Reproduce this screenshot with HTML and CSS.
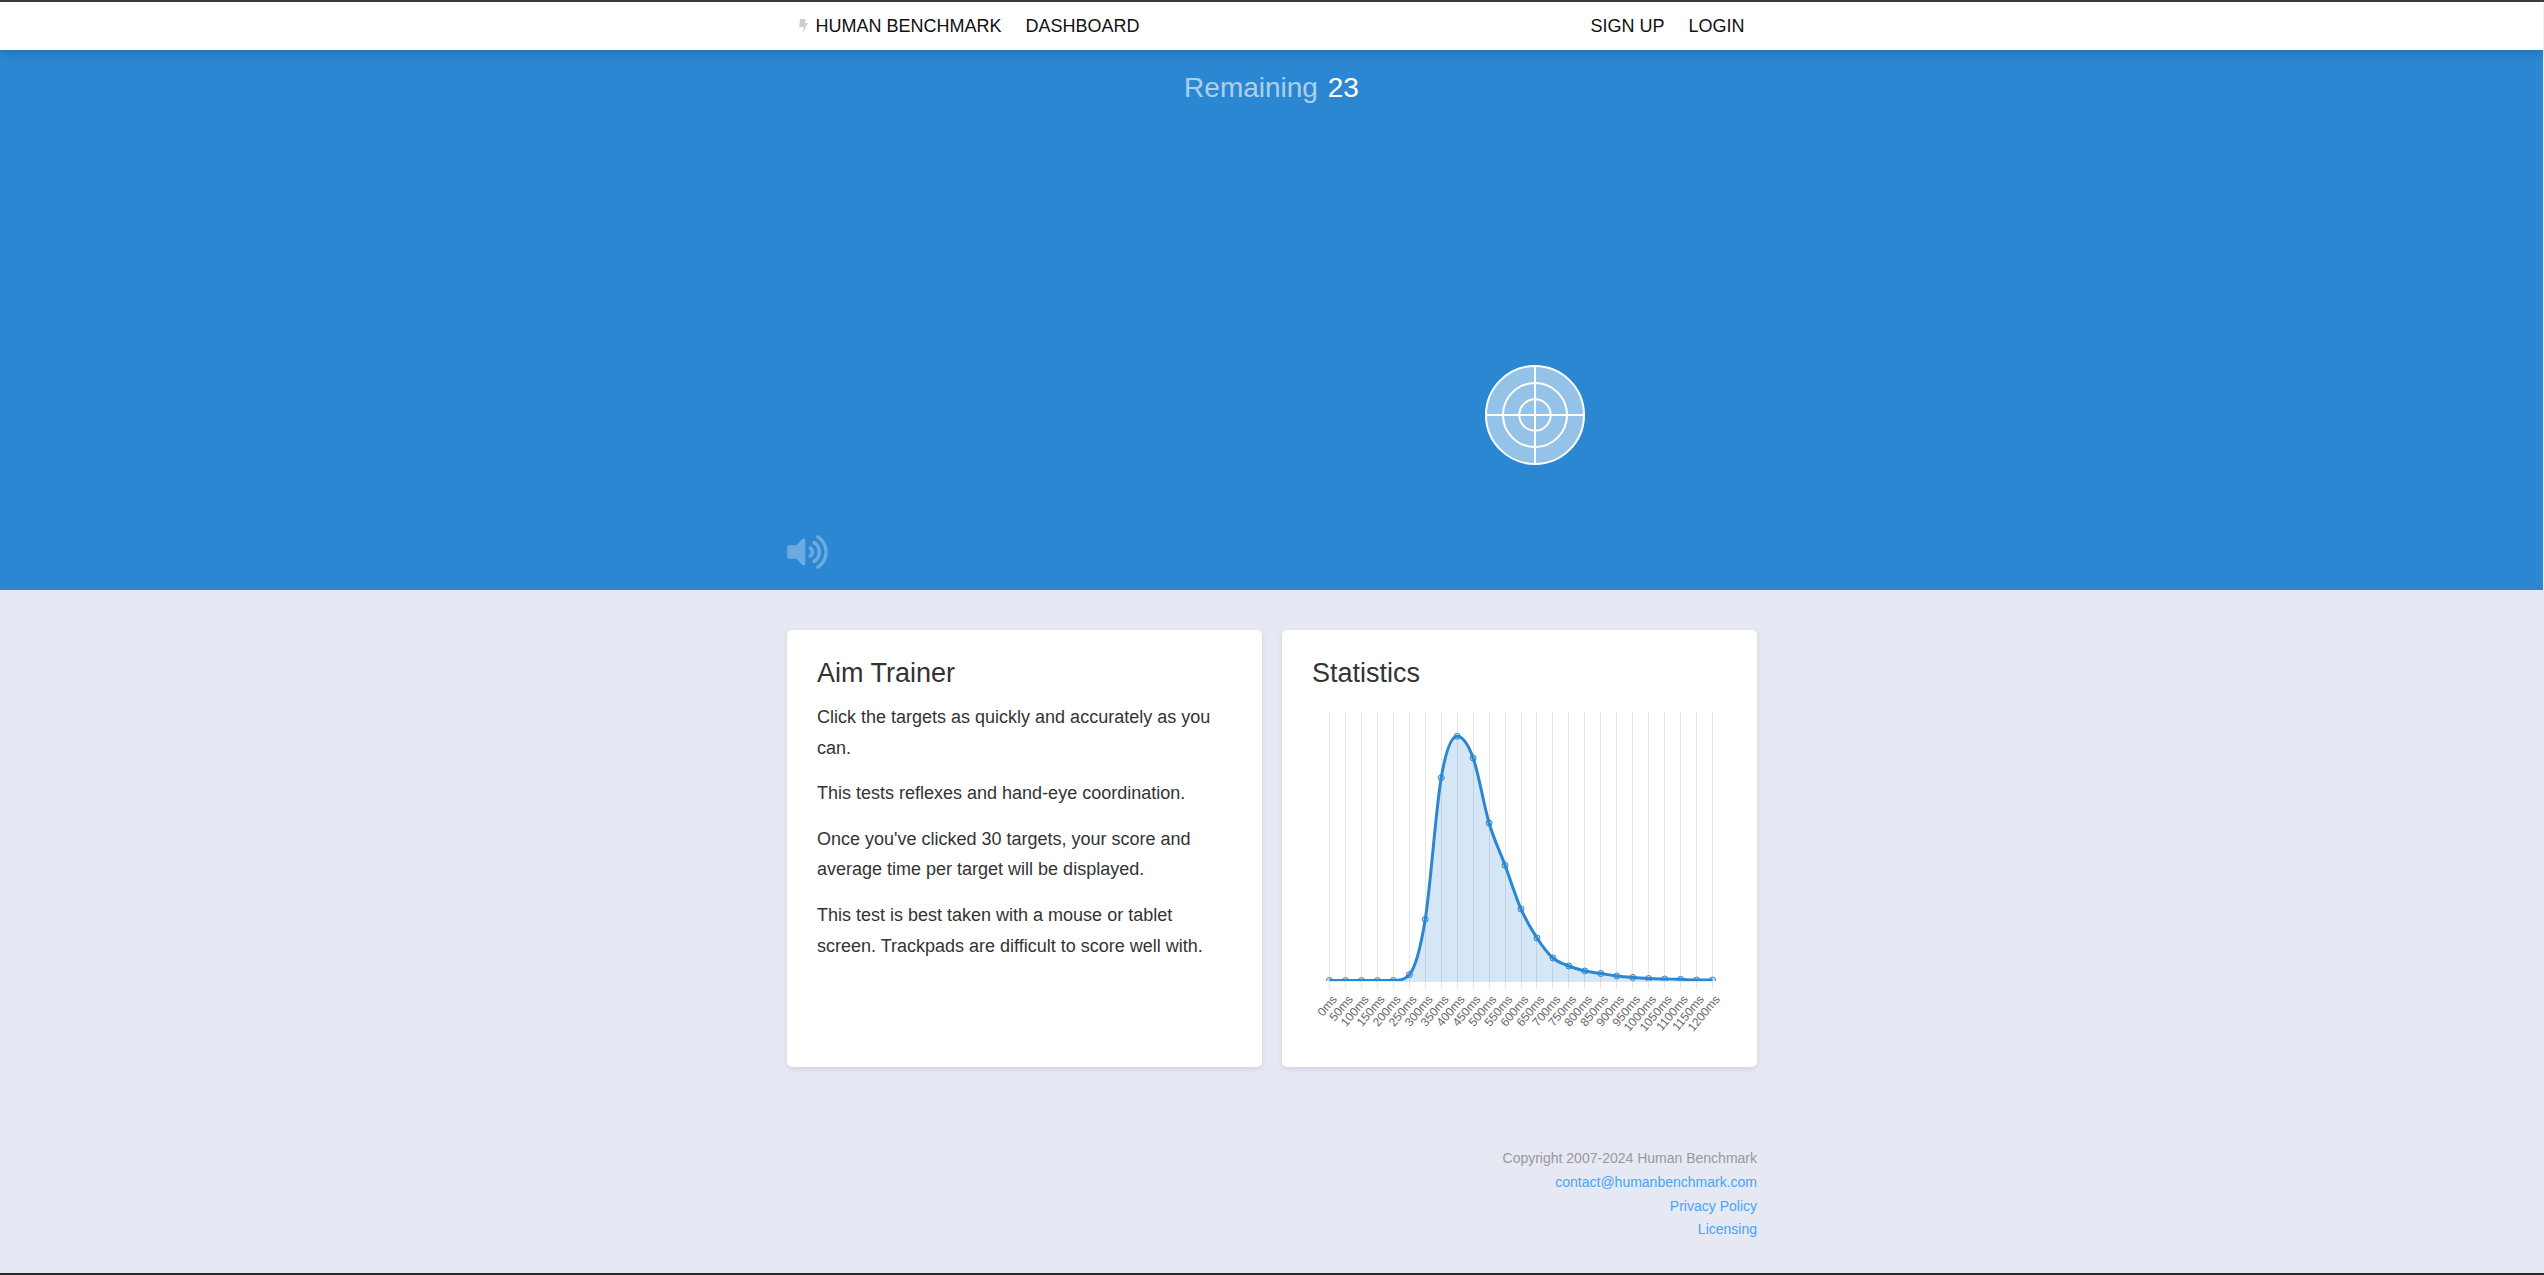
FILE: index.html
```html
<!DOCTYPE html>
<html lang="en">
<head>
<meta charset="utf-8">
<title>Human Benchmark - Aim Trainer</title>
<link rel="stylesheet" href="styles.css">
</head>
<body>
<header class="topbar">
  <nav class="container nav">
    <a class="nav-link brand" href="#"><svg class="bolt" viewBox="0 0 9 14"><path d="M1 0h6L5.900 4h3L3.800 14l1-6H.2z"/></svg>HUMAN BENCHMARK</a>
    <a class="nav-link" href="#">DASHBOARD</a>
    <span class="spacer"></span>
    <a class="nav-link" href="#">SIGN UP</a>
    <a class="nav-link" href="#">LOGIN</a>
  </nav>
</header>
<main>
  <section class="game">
    <div class="container stage">
      <div class="remaining"><span class="label">Remaining</span> <span>23</span></div>
      <svg class="target" viewBox="0 0 102 102">
        <circle class="disc" cx="51" cy="51" r="49"/>
        <circle cx="51" cy="51" r="32"/>
        <circle cx="51" cy="51" r="15.700"/>
        <path d="M51 2v98M2 51h98"/>
      </svg>
      <svg class="volume" viewBox="0 0 576 512"><path d="M215.030 71.050L126.060 160H24c-13.260 0-24 10.740-24 24v144c0 13.250 10.740 24 24 24h102.060l88.970 88.950c15.030 15.030 40.970 4.470 40.970-16.970V88.020c0-21.460-25.960-31.980-40.970-16.970zm233.320-51.080c-11.170-7.330-26.180-4.240-33.510 6.950-7.340 11.170-4.220 26.180 6.950 33.510 66.270 43.490 105.820 116.600 105.820 195.580 0 78.980-39.550 152.090-105.820 195.580-11.170 7.320-14.290 22.340-6.950 33.500 7.040 10.710 21.930 14.560 33.510 6.950C528.270 439.580 576 351.330 576 256S528.270 72.430 448.350 19.970zM480 256c0-63.530-32.060-121.940-85.770-156.240-11.190-7.140-26.030-3.820-33.120 7.460s-3.780 26.210 7.410 33.360C408.270 165.970 432 209.110 432 256s-23.730 90.020-63.480 115.420c-11.190 7.140-14.500 22.070-7.410 33.360 6.510 10.360 21.120 15.140 33.120 7.460C447.940 377.940 480 319.540 480 256zm-141.770-76.870c-11.580-6.330-26.190-2.160-32.610 9.450-6.390 11.610-2.160 26.200 9.450 32.610C327.980 228.280 336 241.630 336 256c0 14.380-8.020 27.720-20.920 34.810-11.610 6.410-15.840 21-9.450 32.610 6.430 11.660 21.050 15.800 32.610 9.450 28.230-15.550 45.770-45 45.770-76.880s-17.540-61.320-45.780-76.860z"/></svg>
    </div>
  </section>
  <section class="container cards">
    <article class="card">
      <h2>Aim Trainer</h2>
      <p>Click the targets as quickly and accurately as you can.</p>
      <p>This tests reflexes and hand-eye coordination.</p>
      <p>Once you've clicked 30 targets, your score and average time per target will be displayed.</p>
      <p>This test is best taken with a mouse or tablet screen. Trackpads are difficult to score well with.</p>
    </article>
    <article class="card">
      <h2>Statistics</h2>
      <svg class="chart" id="chart" viewBox="0 0 415 340"></svg>
    </article>
  </section>
</main>
<footer class="container footer">
  <div>Copyright 2007-2024 Human Benchmark</div>
  <a href="#">contact@humanbenchmark.com</a>
  <a href="#">Privacy Policy</a>
  <a href="#">Licensing</a>
</footer>
<script src="chart.js"></script>
</body>
</html>
```
FILE: styles.css
```css
* { box-sizing: border-box; }
body {
  margin: 0;
  height: 1275px;
  overflow: hidden;
  display: flex;
  flex-direction: column;
  border-top: 2px solid #3c3a3b;
  border-bottom: 2px solid #28282d;
  background: #e6e8f4;
  color: #333;
  font: 18px/1.7 Arial, "Liberation Sans", sans-serif;
}
a { text-decoration: none; }
.container { width: 970px; margin: 0 auto; }
.topbar {
  position: relative;
  z-index: 1;
  height: 48px;
  background: #fff;
  border-right: 1px solid #f1f1f1;
  box-shadow: 0 2px 10px rgba(0, 0, 0, .2);
}
.nav { display: flex; height: 48px; align-items: center; line-height: 46px; }
.nav-link { padding: 0 12px; color: #111; }
.brand { display: flex; align-items: center; }
.bolt { flex: none; width: 9px; height: 14px; margin-right: 8px; fill: #ccc; }
.spacer { flex: 1; }
.game { height: 540px; background: #2b87d1; border-right: 1px solid #f1f1f1; }
.stage { position: relative; height: 540px; padding-top: 14px; text-align: center; }
.remaining { color: #fff; font-size: 28px; line-height: 48px; }
.remaining .label { margin-right: 2px; opacity: .6; }
.target { position: absolute; left: 697px; top: 314px; width: 102px; height: 102px; fill: none; stroke: #fff; stroke-width: 2; }
.disc { fill: rgba(255, 255, 255, .5); }
.volume { position: absolute; left: 0; bottom: 20px; width: 41px; height: 36px; fill: #fff; opacity: .3; }
.cards { display: grid; grid-template-columns: 1fr 1fr; gap: 20px; padding-top: 40px; }
.card {
  height: 437px;
  padding: 20px 30px;
  border-radius: 5px;
  background: #fff;
  box-shadow: 0 2px 5px rgba(0, 0, 0, .1);
}
h2 { margin: 0 0 6px; font-size: 27px; font-weight: 400; line-height: 46px; }
p { margin: 0 0 15px; }
.chart { display: block; width: 415px; height: 340px; margin-top: 7px; }
.grid { stroke: #000; stroke-opacity: .1; }
.area { fill: #2b87d1; fill-opacity: .2; }
.line { fill: none; stroke: #2b87d1; stroke-width: 3; }
.dot { fill: #2b87d1; fill-opacity: .2; stroke: #2b87d1; stroke-width: 1; }
.tick { fill: #666; font-size: 12px; text-anchor: end; }
.footer { padding-top: 80px; font-size: 14px; text-align: right; color: #999; }
.footer a { display: block; color: #45a5fa; }
```
FILE: chart.js
```js
// Distribution of average time per target, in pixels above the baseline.
const values = [1, 1, 1, 1, 1, 6.8, 62.2, 203.8, 245.2, 223.5, 158.5, 116.2, 72.5, 43.5, 23.5, 15.5, 10.5, 8, 5.5, 4, 3, 2.5, 2.2, 1.5, 1.5];
const left = 17.5, step = 15.96, top0 = 9, base = 278.5;
const pts = values.map((v, i) => ({ x: left + step * i, y: base - v }));

// Monotone cubic interpolation: slopes are averaged, then limited.
const n = pts.length;
const delta = pts.slice(1).map((p, i) => (p.y - pts[i].y) / step);
const slope = pts.map((p, i) => {
  if (i === 0) return delta[0];
  if (i === n - 1) return delta[n - 2];
  return delta[i - 1] * delta[i] <= 0 ? 0 : (delta[i - 1] + delta[i]) / 2;
});
delta.forEach((d, i) => {
  if (d === 0) { slope[i] = slope[i + 1] = 0; return; }
  const a = slope[i] / d, b = slope[i + 1] / d, s = a * a + b * b;
  if (s > 9) {
    const t = 3 / Math.sqrt(s);
    slope[i] = a * t * d;
    slope[i + 1] = b * t * d;
  }
});

let curve = `M${pts[0].x} ${pts[0].y}`;
for (let i = 1; i < n; i++) {
  const a = pts[i - 1], b = pts[i], h = step / 3;
  curve += `C${a.x + h} ${a.y + slope[i - 1] * h} ${b.x - h} ${b.y - slope[i] * h} ${b.x} ${b.y}`;
}
const end = pts[n - 1].x;
let out = '<clipPath id="plot"><rect x="14" y="9" width="391" height="269"/></clipPath>';
pts.forEach((p, i) => {
  const x = Math.round(p.x - 0.5) + 0.5;
  out += `<path class="grid" d="M${x} ${top0}V286"/>`;
  out += `<text class="tick" transform="translate(${p.x + 5} 294) rotate(-50)" dy="4">${i * 50}ms</text>`;
});
out += `<path class="grid" d="M${left} ${base}H${end}"/>`;
out += `<g clip-path="url(#plot)"><path class="area" d="${curve}V${base}H${left}Z"/><path class="line" d="${curve}"/>`;
out += pts.map(p => `<circle class="dot" cx="${p.x}" cy="${p.y}" r="3"/>`).join('') + '</g>';
document.getElementById('chart').innerHTML = out;
```
